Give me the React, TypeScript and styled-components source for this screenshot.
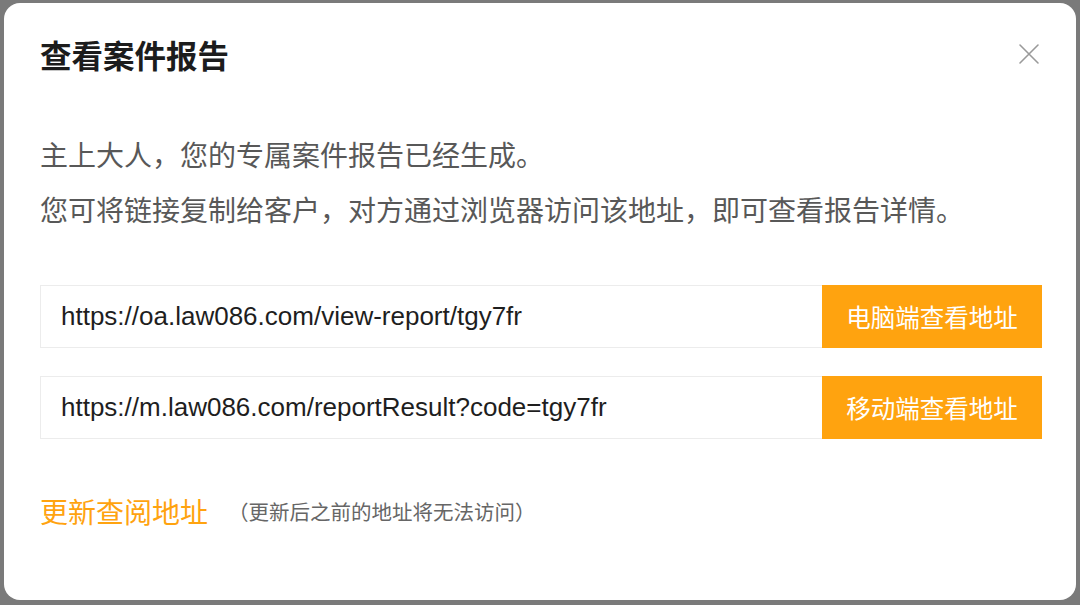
import React from 'react';
import styled, { createGlobalStyle } from 'styled-components';

const GlobalStyle = createGlobalStyle`
  html, body {
    margin: 0;
    padding: 0;
    background: #7a7a7a;
  }
  * {
    box-sizing: border-box;
  }
`;

const CJK = `"Liberation Sans", "Noto Sans CJK SC", sans-serif`;
const ORANGE = '#ffa30f';

const Backdrop = styled.div`
  width: 1080px;
  height: 605px;
  padding: 3px 4px 5px 4px;
  background: #7a7a7a;
  overflow: hidden;
`;

const Dialog = styled.div`
  height: 597px;
  background: #fff;
  border-radius: 16px;
  padding: 0 34px 0 36px;
  display: flex;
  flex-direction: column;
  font-family: ${CJK};
`;

const Header = styled.header`
  display: flex;
  align-items: center;
  justify-content: space-between;
  height: 104px;
  padding-bottom: 2px;
`;

const Title = styled.h1`
  margin: 0;
  font-size: 31.5px;
  font-weight: 700;
  color: #1c1c1c;
`;

const CloseButton = styled.button`
  border: none;
  background: none;
  padding: 0;
  margin-right: 2px;
  display: flex;
  color: #9a9a9a;
  cursor: pointer;
`;

const Intro = styled.div`
  display: flex;
  flex-direction: column;
  margin-top: 22px;
`;

const IntroLine = styled.p`
  margin: 0;
  font-size: 28px;
  line-height: 55px;
  color: #585858;
`;

const LinkList = styled.div`
  display: flex;
  flex-direction: column;
  gap: 28px;
  margin-top: 46px;
`;

const LinkRow = styled.div`
  display: flex;
  height: 63px;
`;

const UrlBox = styled.div`
  flex: 1;
  display: flex;
  align-items: center;
  padding-left: 20px;
  border: 1px solid #ececec;
  border-right: none;
  font-family: "Liberation Sans", "Noto Sans CJK SC", sans-serif;
  font-size: 26px;
  color: #1e1e1e;
`;

const ViewButton = styled.button`
  width: 220px;
  border: none;
  background: ${ORANGE};
  color: #fff;
  font-family: ${CJK};
  font-size: 24.5px;
  cursor: pointer;
  padding: 0;
`;

const Footer = styled.div`
  display: flex;
  align-items: center;
  gap: 20px;
  margin-top: 52px;
`;

const RefreshLink = styled.a`
  font-size: 28px;
  color: ${ORANGE};
  cursor: pointer;
`;

const Hint = styled.span`
  font-size: 20.5px;
  color: #666;
`;

const links = [
  { url: 'https://oa.law086.com/view-report/tgy7fr', label: '电脑端查看地址' },
  { url: 'https://m.law086.com/reportResult?code=tgy7fr', label: '移动端查看地址' },
];

const CloseIcon = () => (
  <svg width="22" height="22" viewBox="0 0 22 22" fill="none">
    <path d="M2 2 L20 20 M20 2 L2 20" stroke="currentColor" strokeWidth="1.6" strokeLinecap="round" />
  </svg>
);

const App: React.FC = () => {
  return (
    <>
      <GlobalStyle />
      <Backdrop>
        <Dialog>
          <Header>
            <Title>查看案件报告</Title>
            <CloseButton aria-label="关闭">
              <CloseIcon />
            </CloseButton>
          </Header>

          <Intro>
            <IntroLine>主上大人，您的专属案件报告已经生成。</IntroLine>
            <IntroLine>您可将链接复制给客户，对方通过浏览器访问该地址，即可查看报告详情。</IntroLine>
          </Intro>

          <LinkList>
            {links.map((l) => (
              <LinkRow key={l.url}>
                <UrlBox>{l.url}</UrlBox>
                <ViewButton>{l.label}</ViewButton>
              </LinkRow>
            ))}
          </LinkList>

          <Footer>
            <RefreshLink>更新查阅地址</RefreshLink>
            <Hint>（更新后之前的地址将无法访问）</Hint>
          </Footer>
        </Dialog>
      </Backdrop>
    </>
  );
};

export default App;
